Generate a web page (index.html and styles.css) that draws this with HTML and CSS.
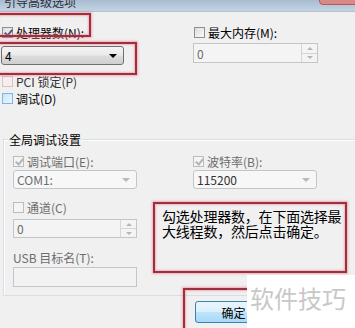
FILE: index.html
```html
<!DOCTYPE html>
<html lang="zh-CN">
<head>
    <meta charset="UTF-8">
    <meta name="viewport" content="width=device-width, initial-scale=1.0">
    <title>引导高级选项</title>
    <link rel="stylesheet" href="styles.css">
</head>
<body>
    <div class="window">
        <div class="titlebar">
            <span class="title">引导高级选项</span>
            <span class="close"></span>
        </div>

        <div class="top">
            <div class="col">
                <label class="check"><span class="box checked"></span>处理器数(N):</label>
                <div class="combo active"><span>4</span><span class="arrow"></span></div>
                <label class="check pci"><span class="box faded"></span>PCI 锁定(P)</label>
                <label class="check debug"><span class="box hover"></span>调试(D)</label>
            </div>
            <div class="col">
                <label class="check"><span class="box"></span>最大内存(M):</label>
                <div class="spin top-spin"><span>0</span><span class="spinner"><i class="up"></i><i class="down"></i></span></div>
            </div>
        </div>

        <div class="group">
            <div class="group-title">全局调试设置</div>
            <div class="group-cols">
                <div class="col">
                    <label class="check disabled"><span class="box checked"></span>调试端口(E):</label>
                    <div class="combo"><span>COM1:</span><span class="arrow"></span></div>
                    <label class="check disabled channel"><span class="box"></span>通道(C)</label>
                    <div class="spin"><span>0</span><span class="spinner"><i class="up"></i><i class="down"></i></span></div>
                    <div class="field-label">USB 目标名(T):</div>
                    <div class="textbox"></div>
                </div>
                <div class="col">
                    <label class="check disabled"><span class="box checked"></span>波特率(B):</label>
                    <div class="combo"><span class="dark">115200</span><span class="arrow"></span></div>
                </div>
            </div>
        </div>

        <div class="buttons">
            <button class="btn">确定</button>
        </div>

        <!-- annotations drawn over the screenshot -->
        <div class="mark mark-cpu"></div>
        <div class="mark mark-combo"></div>
        <div class="mark mark-ok"></div>
        <div class="mark note">勾选处理器数，在下面选择最大线程数，然后点击确定。</div>
        <div class="watermark">软件技巧</div>
    </div>
</body>
</html>
```

FILE: styles.css
```css
body {
    margin: 0;
    background: #f0f0f0;
    font-family: "Noto Sans CJK SC", "Liberation Sans", sans-serif;
    font-size: 12px;
    color: #000;
}
.window {
    position: relative;
    width: 355px;
    height: 328px;
    overflow: hidden;
}
.titlebar {
    height: 11px;
    overflow: hidden;
    background: linear-gradient(#a9bbd0, #c3d3e4);
    border-bottom: 1px solid #b4c1cf;
    padding-left: 4px;
}
.title {
    display: block;
    margin-top: -6px;
    line-height: 16px;
    font-size: 12px;
    color: #2a2f38;
}
.close {
    position: absolute;
    top: -3px;
    right: -4px;
    width: 38px;
    height: 6px;
    border: 1px solid #b35a5a;
    border-radius: 0 0 4px 4px;
    background: #d98a86;
}

/* checkboxes */
.check {
    display: flex;
    align-items: center;
    height: 13px;
    line-height: 13px;
    white-space: nowrap;
}
.box {
    position: relative;
    width: 11px;
    height: 11px;
    box-sizing: border-box;
    margin-right: 3px;
    border: 1px solid #8e8f8f;
    background: linear-gradient(135deg, #dcdcdc, #fbfbfb);
}
.box.checked::after {
    content: "";
    position: absolute;
    left: 3px;
    top: 0;
    width: 3px;
    height: 6px;
    border: solid #4a5a7d;
    border-width: 0 2px 2px 0;
    transform: rotate(40deg);
}
.box.faded {
    border-color: #d4c4c4;
    background: #f6eeee;
}
.box.hover {
    border-color: #7eb4ea;
    background: linear-gradient(135deg, #c7e7f7, #eaf6fd);
}
.check.disabled {
    color: #6d6d6d;
}
.check.disabled .box {
    border-color: #bcbcbc;
    background: #f4f4f4;
}
.check.disabled .box.checked::after {
    border-color: #b4b4b4;
}

/* top area */
.top {
    display: grid;
    grid-template-columns: 192px 125px;
    padding: 14px 0 0 1px;
}
.top .check {
    padding-left: 1px;
}
.col {
    display: flex;
    flex-direction: column;
}
.combo {
    display: flex;
    align-items: center;
    justify-content: space-between;
    height: 19px;
    box-sizing: border-box;
    margin-top: 2px;
    padding: 0 6px 0 3px;
    border: 1px solid #c2c6c9;
    border-radius: 3px;
    background: #f7f7f7;
    color: #6d6d6d;
}
.combo .dark {
    color: #333;
}
.combo .arrow {
    width: 0;
    height: 0;
    border: 4px solid transparent;
    border-top: 4px solid #b9b9b9;
    border-bottom: 0;
}
.combo.active {
    width: 123px;
    margin-top: 7px;
    border-color: #707070;
    background: linear-gradient(#f3f3f3, #ebebeb 45%, #dcdcdc 55%, #cfcfcf);
    color: #000;
}
.combo.active .arrow {
    border-top-color: #000;
}
.pci {
    margin-top: 10px;
    color: #333;
}
.debug {
    margin-top: 4px;
}
.spin {
    display: flex;
    align-items: center;
    justify-content: space-between;
    height: 19px;
    box-sizing: border-box;
    margin-top: 5px;
    padding-left: 3px;
    border: 1px solid #c2c6c9;
    background: #f4f4f4;
    color: #6d6d6d;
}
.top-spin {
    height: 20px;
    margin-top: 4px;
}
.spinner {
    display: flex;
    flex-direction: column;
    align-self: stretch;
    width: 15px;
    border-left: 1px solid #d6d6d6;
}
.spinner i {
    flex: 1;
    display: flex;
    align-items: center;
    justify-content: center;
}
.spinner i + i {
    border-top: 1px solid #d6d6d6;
}
.spinner .up::after,
.spinner .down::after {
    content: "";
    border: 3px solid transparent;
}
.spinner .up::after {
    border-bottom: 3px solid #b5b5b5;
    border-top: 0;
}
.spinner .down::after {
    border-top: 3px solid #b5b5b5;
    border-bottom: 0;
}

/* group box */
.group {
    margin: 34px 0 0 3px;
    padding: 0 0 8px 9px;
    border: 1px solid #d5dfe5;
    border-right: 0;
    box-shadow: inset 1px 1px 0 #fff;
}
.group-title {
    width: max-content;
    margin: -7px 0 0 -5px;
    padding: 0 1px;
    line-height: 13px;
    background: #f0f0f0;
}
.group-cols {
    display: grid;
    grid-template-columns: 180px 125px;
    margin-top: 9px;
}
.group-cols .col > .combo,
.group-cols .col > .spin {
    width: 124px;
}
.channel {
    margin-top: 12px;
}
.field-label {
    margin-top: 13px;
    line-height: 13px;
    color: #6d6d6d;
}
.textbox {
    width: 124px;
    height: 20px;
    box-sizing: border-box;
    margin-top: 3px;
    border: 1px solid #c2c6c9;
    background: #f2f2f2;
}

/* buttons */
.buttons {
    padding: 5px 0 0 195px;
}
.btn {
    display: block;
    width: 75px;
    height: 22px;
    padding: 0 0 0 2px;
    border: 1px solid #3c7fb1;
    border-radius: 3px;
    background: linear-gradient(#eaf6fd, #d9f0fc 50%, #bee6fd 50%, #a7d9f5);
    font-family: inherit;
    font-size: 12px;
    color: #000;
}

/* annotations */
.mark {
    position: absolute;
    box-sizing: border-box;
    border: 2px solid #9e2f40;
    box-shadow: 0 0 2px 1px rgba(232, 128, 140, 0.6), inset 0 0 2px 1px rgba(232, 128, 140, 0.55);
}
.mark-cpu {
    left: -4px;
    top: 13px;
    width: 95px;
    height: 24px;
}
.mark-combo {
    left: -4px;
    top: 42px;
    width: 141px;
    height: 33px;
}
.mark-ok {
    left: 183px;
    top: 288px;
    width: 180px;
    height: 50px;
}
.note {
    left: 153px;
    top: 202px;
    width: 194px;
    height: 71px;
    padding: 5px 0 0 7px;
    background: #f0f0f0;
    font-size: 14px;
    line-height: 15px;
    letter-spacing: -0.2px;
}
.watermark {
    position: absolute;
    left: 247px;
    top: 275px;
    width: 108px;
    height: 53px;
    padding: 8px 0 0 3px;
    box-sizing: border-box;
    background: #fff;
    font-size: 24px;
    line-height: 30px;
    color: #c8c8c8;
    white-space: nowrap;
}
```
